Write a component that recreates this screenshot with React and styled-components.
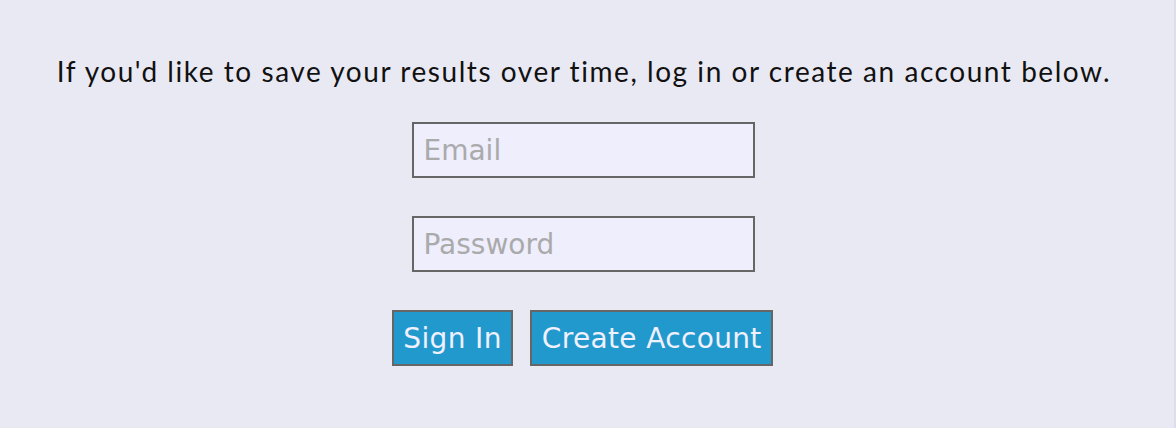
import React from "react";
import styled, { createGlobalStyle } from "styled-components";

const GlobalStyle = createGlobalStyle`
  html, body {
    margin: 0;
    padding: 0;
    background: #e9e9f3;
  }
  #root {
    min-height: 428px;
  }
`;

export default function App() {
  return (
    <>
      <GlobalStyle />
      <Page>
        <Intro>
          If you'd like to save your results over time, log in or create an account below.
        </Intro>
        <Form onSubmit={(e) => e.preventDefault()}>
          <Field type="email" placeholder="Email" />
          <Field type="password" placeholder="Password" />
          <ButtonRow>
            <ActionButton type="submit">Sign In</ActionButton>
            <ActionButton type="button">Create Account</ActionButton>
          </ButtonRow>
        </Form>
      </Page>
    </>
  );
}

/* ---------------- Styled Components ---------------- */

const Page = styled.main`
  box-sizing: border-box;
  min-height: 428px;
  width: 100%;
  border-right: 2px solid #dedeea;
  padding: 52px 6px 0 0;
  display: flex;
  flex-direction: column;
  align-items: center;
`;

const Intro = styled.p`
  margin: 0;
  font-family: "Lato", "Open Sans", sans-serif;
  font-size: 28px;
  letter-spacing: 1.55px;
  line-height: 38px;
  color: #111;
  text-align: center;
  white-space: nowrap;
`;

const Form = styled.form`
  margin-top: 32px;
  display: flex;
  flex-direction: column;
  align-items: center;
  gap: 38px;
`;

const Field = styled.input`
  box-sizing: border-box;
  width: 343px;
  height: 56px;
  margin: 0;
  padding: 0 9px;
  border: 2px solid #666666;
  border-radius: 0;
  background: #eeeefd;
  font-family: "DejaVu Sans", "Liberation Sans", sans-serif;
  font-size: 28px;
  color: #333;
  outline: none;

  &::placeholder {
    color: #aaaaaa;
  }
`;

const ButtonRow = styled.div`
  display: flex;
  gap: 17px;
  margin-left: -3px;
`;

const ActionButton = styled.button`
  box-sizing: border-box;
  height: 56px;
  margin: 0;
  padding: 0 9.5px;
  border: 2px solid #666666;
  border-radius: 0;
  background: #2299cc;
  color: #f0f0ff;
  font-family: "DejaVu Sans", "Liberation Sans", sans-serif;
  font-size: 28px;
  letter-spacing: 0.35px;
  cursor: pointer;
`;
